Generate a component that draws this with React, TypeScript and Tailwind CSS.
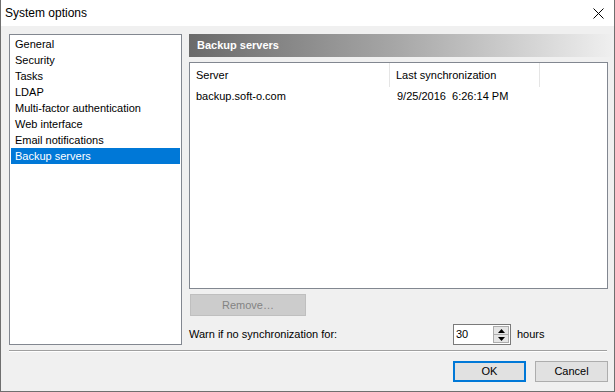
import React from "react";

const items = [
  "General",
  "Security",
  "Tasks",
  "LDAP",
  "Multi-factor authentication",
  "Web interface",
  "Email notifications",
  "Backup servers",
];

export default function App() {
  return (
    <div
      className="w-[615px] h-[392px] flex flex-col bg-[#f0f0f0] border-x border-b border-[#6f6f6f] text-[11px] text-black overflow-hidden"
      style={{ fontFamily: '"Liberation Sans", Arial, sans-serif' }}
    >
      {/* Title bar */}
      <div className="h-[26px] bg-white flex items-center justify-between pl-[4px] pr-[10px] shrink-0">
        <span className="text-[12px]">System options</span>
        <svg width="11" height="11" viewBox="0 0 11 11" className="mt-[1px]">
          <path d="M0.5 0.5 L10.5 10.5 M10.5 0.5 L0.5 10.5" stroke="#000" strokeWidth="1" />
        </svg>
      </div>

      {/* Body */}
      <div className="flex pt-[8px] pl-[8px]">
        {/* Left list */}
        <div className="w-[173px] h-[311px] border border-[#828790] bg-white p-[1px] shrink-0">
          {items.map((it) => (
            <div
              key={it}
              className={
                "h-[16px] leading-[16px] pl-[4px] w-[169px] " +
                (it === "Backup servers" ? "bg-[#0078d7] text-white" : "")
              }
            >
              {it}
            </div>
          ))}
        </div>

        {/* Right panel */}
        <div className="ml-[7px] w-[419px] flex flex-col">
          <div
            className="h-[23px] w-[422px] flex items-center pl-[8px] text-white font-bold text-[11px]"
            style={{ background: "linear-gradient(to right, #6a6a6a 0%, #a8a8a8 50%, #efefef 100%)" }}
          >
            Backup servers
          </div>

          {/* Table */}
          <div className="mt-[5px] h-[227px] border border-[#828790] bg-white">
            <div className="flex h-[24px] items-center">
              <div className="w-[200px] h-full flex items-center pl-[6px] border-r border-[#e5e5e5]">Server</div>
              <div className="w-[150px] h-full flex items-center pl-[6px] border-r border-[#e5e5e5]">
                Last synchronization
              </div>
            </div>
            <div className="flex h-[18px] items-center">
              <div className="w-[201px] pl-[6px]">backup.soft-o.com</div>
              <div className="pl-[6px]">9/25/2016&nbsp;&nbsp;6:26:14 PM</div>
            </div>
          </div>

          {/* Remove button */}
          <div className="mt-[5px] ml-[1px] w-[116px] h-[22px] bg-[#cccccc] border border-[#bfbfbf] flex items-center justify-center text-[#838383]">
            Remove…
          </div>

          {/* Warn row */}
          <div className="mt-[8px] h-[21px] flex items-center">
            <span className="w-[264px]">Warn if no synchronization for:</span>
            <div className="w-[58px] h-[21px] border border-[#7a7a7a] bg-white flex items-center">
              <span className="flex-1 pl-[2px]">30</span>
              <div className="w-[16px] h-[17px] mr-[1px] flex flex-col border border-[#acacac]">
                <div className="flex-1 bg-[#e5e5e5] flex items-center justify-center border-b border-[#acacac]">
                  <svg width="7" height="4" viewBox="0 0 7 4">
                    <path d="M3.5 0 L7 4 L0 4 Z" fill="#000" />
                  </svg>
                </div>
                <div className="flex-1 bg-[#e5e5e5] flex items-center justify-center">
                  <svg width="7" height="4" viewBox="0 0 7 4">
                    <path d="M0 0 L7 0 L3.5 4 Z" fill="#000" />
                  </svg>
                </div>
              </div>
            </div>
            <span className="ml-[6px]">hours</span>
          </div>
        </div>
      </div>

      {/* Separator */}
      <div className="mt-[5px] ml-[8px] w-[598px] h-[2px] border-t border-[#a0a0a0] border-b border-b-white" />

      {/* Buttons */}
      <div className="mt-[9px] flex justify-end pr-[6px] gap-[9px]">
        <div className="w-[73px] h-[21px] border-2 border-[#0078d7] bg-[#e1e1e1] flex items-center justify-center">
          OK
        </div>
        <div className="w-[73px] h-[21px] border border-[#adadad] bg-[#e1e1e1] flex items-center justify-center">
          Cancel
        </div>
      </div>
    </div>
  );
}
